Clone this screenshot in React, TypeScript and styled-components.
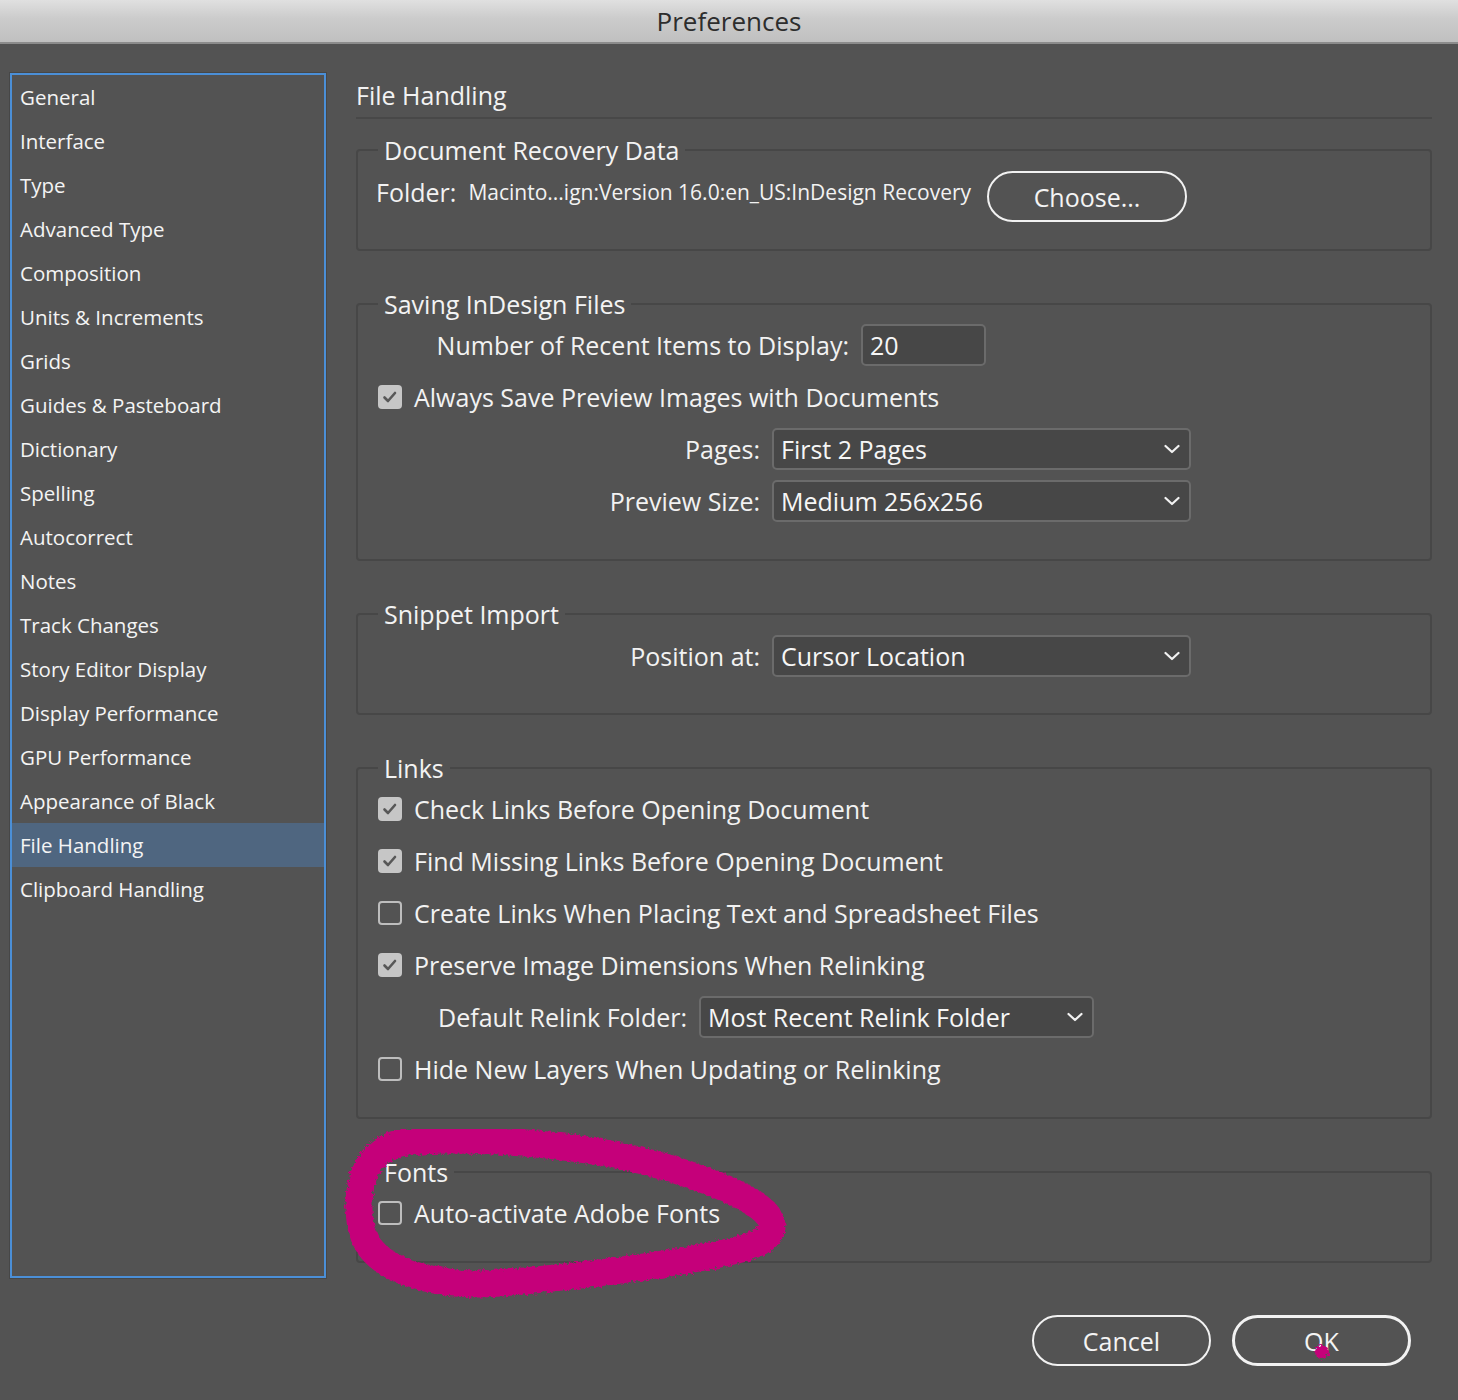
import React from 'react';
import styled, { createGlobalStyle } from 'styled-components';

const GlobalStyle = createGlobalStyle`
  html, body {
    margin: 0;
    padding: 0;
    background: #535353;
  }
  body {
    font-family: "Open Sans", "DejaVu Sans", sans-serif;
    color: #f2f2f2;
  }
`;

const Window = styled.div`
  position: relative;
  width: 1458px;
  height: 1400px;
  background: #535353;
  overflow: hidden;
  display: flex;
  flex-direction: column;
`;

const TitleBar = styled.div`
  height: 42px;
  flex-shrink: 0;
  background: linear-gradient(#e0e0e0, #cbcbcb 45%, #c0c0c0);
  border-bottom: 2px solid #8c8c8c;
  display: flex;
  align-items: center;
  justify-content: center;
  font-size: 26px;
  color: #2d2d2d;
`;

const Main = styled.div`
  display: flex;
  align-items: flex-start;
  gap: 30px;
  padding: 29px 0 0 10px;
`;

const Sidebar = styled.ul`
  list-style: none;
  margin: 0;
  padding: 0;
  width: 316px;
  height: 1205px;
  box-sizing: border-box;
  border: 2px solid #4b8fd7;
  box-shadow: 0 0 0 1px #474747;
`;

const NavItem = styled.li<{ $active?: boolean }>`
  height: 44px;
  display: flex;
  align-items: center;
  padding-left: 8px;
  font-size: 20.5px;
  color: #f4f4f4;
  background: ${(p) => (p.$active ? '#4f6680' : 'transparent')};
`;

const Content = styled.div`
  width: 1076px;
  display: flex;
  flex-direction: column;
`;

const PageTitle = styled.div`
  height: 44px;
  display: flex;
  align-items: center;
  font-size: 25px;
  border-bottom: 2px solid #484848;
  margin-bottom: 17px;
`;

const Group = styled.fieldset<{ $top: number; $bottom: number }>`
  margin: 0 0 39px 0;
  min-width: 0;
  padding: ${(p) => p.$top}px 0 ${(p) => p.$bottom}px 0;
  border: 2px solid #474747;
  border-radius: 4px;

  &:last-child {
    margin-bottom: 0;
  }
`;

const Legend = styled.legend`
  margin-left: 20px;
  padding: 0 6px;
  font-size: 25px;
  line-height: 28px;
  color: #f3f3f3;
`;

const Row = styled.div<{ $indent?: number }>`
  height: 52px;
  display: flex;
  align-items: center;
  padding-left: ${(p) => p.$indent ?? 18}px;
  font-size: 25px;
  white-space: nowrap;
`;

const Label = styled.span<{ $width?: number }>`
  display: inline-block;
  width: ${(p) => (p.$width ? `${p.$width}px` : 'auto')};
  text-align: right;
  margin-right: 12px;
`;

const PathText = styled.span`
  font-size: 21px;
  margin-right: 16px;
`;

const PillButton = styled.button<{ $width: number; $primary?: boolean; $drop?: number }>`
  width: ${(p) => p.$width}px;
  height: 51px;
  margin-top: ${(p) => p.$drop ?? 0}px;
  box-sizing: border-box;
  border-radius: 26px;
  border: ${(p) => (p.$primary ? 3 : 2)}px solid #f2f2f2;
  background: transparent;
  color: #f4f4f4;
  font-family: inherit;
  font-size: 25px;
  padding: 0;
  cursor: pointer;
`;

const Field = styled.div<{ $width: number }>`
  width: ${(p) => p.$width}px;
  height: 42px;
  box-sizing: border-box;
  border: 2px solid #6b6b6b;
  border-radius: 5px;
  background: #474747;
  display: flex;
  align-items: center;
  justify-content: space-between;
  padding: 0 9px 0 7px;
  font-size: 25px;
  color: #f6f6f6;
`;

const Box = styled.span<{ $checked?: boolean }>`
  width: 24px;
  height: 24px;
  box-sizing: border-box;
  border-radius: 4px;
  margin-right: 12px;
  flex-shrink: 0;
  display: inline-flex;
  align-items: center;
  justify-content: center;
  background: ${(p) => (p.$checked ? '#c6c6c6' : 'transparent')};
  border: ${(p) => (p.$checked ? 'none' : '2px solid #bdbdbd')};
`;

const Footer = styled.div`
  display: flex;
  justify-content: flex-end;
  gap: 21px;
  padding: 37px 47px 0 0;
`;

const Scribble = styled.svg`
  position: absolute;
  left: 0;
  top: 0;
  pointer-events: none;
`;

const Chevron = () => (
  <svg width="16" height="10" viewBox="0 0 16 10">
    <path d="M1.5 2 L8 8 L14.5 2" fill="none" stroke="#f2f2f2" strokeWidth="2.2" strokeLinecap="round" strokeLinejoin="round" />
  </svg>
);

const Checkbox = ({ checked }: { checked?: boolean }) => (
  <Box $checked={checked}>
    {checked && (
      <svg width="16" height="14" viewBox="0 0 16 14">
        <path d="M2.5 7.5 L6 11 L13 3" fill="none" stroke="#585858" strokeWidth="2.6" strokeLinecap="round" strokeLinejoin="round" />
      </svg>
    )}
  </Box>
);

const Select = ({ width, value }: { width: number; value: string }) => (
  <Field $width={width}>
    <span>{value}</span>
    <Chevron />
  </Field>
);

const navItems = [
  'General',
  'Interface',
  'Type',
  'Advanced Type',
  'Composition',
  'Units & Increments',
  'Grids',
  'Guides & Pasteboard',
  'Dictionary',
  'Spelling',
  'Autocorrect',
  'Notes',
  'Track Changes',
  'Story Editor Display',
  'Display Performance',
  'GPU Performance',
  'Appearance of Black',
  'File Handling',
  'Clipboard Handling',
];

export default function App() {
  return (
    <Window>
      <GlobalStyle />
      <TitleBar>Preferences</TitleBar>
      <Main>
        <Sidebar>
          {navItems.map((item) => (
            <NavItem key={item} $active={item === 'File Handling'}>
              {item}
            </NavItem>
          ))}
        </Sidebar>

        <Content>
          <PageTitle>File Handling</PageTitle>

          <Group $top={2} $bottom={31}>
            <Legend>Document Recovery Data</Legend>
            <Row>
              <Label>Folder:</Label>
              <PathText>Macinto...ign:Version 16.0:en_US:InDesign Recovery</PathText>
              <PillButton $width={200} $drop={9}>Choose...</PillButton>
            </Row>
          </Group>

          <Group $top={1} $bottom={32}>
            <Legend>Saving InDesign Files</Legend>
            <Row>
              <Label $width={473}>Number of Recent Items to Display:</Label>
              <Field $width={125}>20</Field>
            </Row>
            <Row $indent={20}>
              <Checkbox checked />
              Always Save Preview Images with Documents
            </Row>
            <Row>
              <Label $width={384}>Pages:</Label>
              <Select width={419} value="First 2 Pages" />
            </Row>
            <Row>
              <Label $width={384}>Preview Size:</Label>
              <Select width={419} value="Medium 256x256" />
            </Row>
          </Group>

          <Group $top={2} $bottom={31}>
            <Legend>Snippet Import</Legend>
            <Row>
              <Label $width={384}>Position at:</Label>
              <Select width={419} value="Cursor Location" />
            </Row>
          </Group>

          <Group $top={1} $bottom={22}>
            <Legend>Links</Legend>
            <Row $indent={20}>
              <Checkbox checked />
              Check Links Before Opening Document
            </Row>
            <Row $indent={20}>
              <Checkbox checked />
              Find Missing Links Before Opening Document
            </Row>
            <Row $indent={20}>
              <Checkbox />
              Create Links When Placing Text and Spreadsheet Files
            </Row>
            <Row $indent={20}>
              <Checkbox checked />
              Preserve Image Dimensions When Relinking
            </Row>
            <Row>
              <Label $width={311}>Default Relink Folder:</Label>
              <Select width={395} value="Most Recent Relink Folder" />
            </Row>
            <Row $indent={20}>
              <Checkbox />
              Hide New Layers When Updating or Relinking
            </Row>
          </Group>

          <Group $top={1} $bottom={22}>
            <Legend>Fonts</Legend>
            <Row $indent={20}>
              <Checkbox />
              Auto-activate Adobe Fonts
            </Row>
          </Group>
        </Content>
      </Main>

      <Footer>
        <PillButton $width={179}>Cancel</PillButton>
        <PillButton $width={179} $primary>
          OK
        </PillButton>
      </Footer>

      {/* hand-drawn annotation over the Fonts group */}
      <Scribble width="1458" height="1400" viewBox="0 0 1458 1400">
        <defs>
          <filter id="rough" x="-5%" y="-5%" width="110%" height="110%">
            <feTurbulence type="fractalNoise" baseFrequency="0.35" numOctaves="2" seed="3" />
            <feDisplacementMap in="SourceGraphic" scale="6" />
          </filter>
        </defs>
        <g filter="url(#rough)" fill="none" stroke="#c5007a" strokeLinecap="round" strokeLinejoin="round">
          <path
            d="M359 1210 C358 1180 368 1150 400 1143 C450 1136 540 1142 600 1152 C660 1162 740 1188 765 1212 C780 1228 770 1240 745 1248 C700 1260 600 1275 500 1283 C440 1288 390 1272 372 1250 C362 1238 360 1225 359 1210 Z"
            strokeWidth="27"
          />
          <circle cx="1322" cy="1352" r="7" fill="#c5007a" stroke="none" />
        </g>
      </Scribble>
    </Window>
  );
}
